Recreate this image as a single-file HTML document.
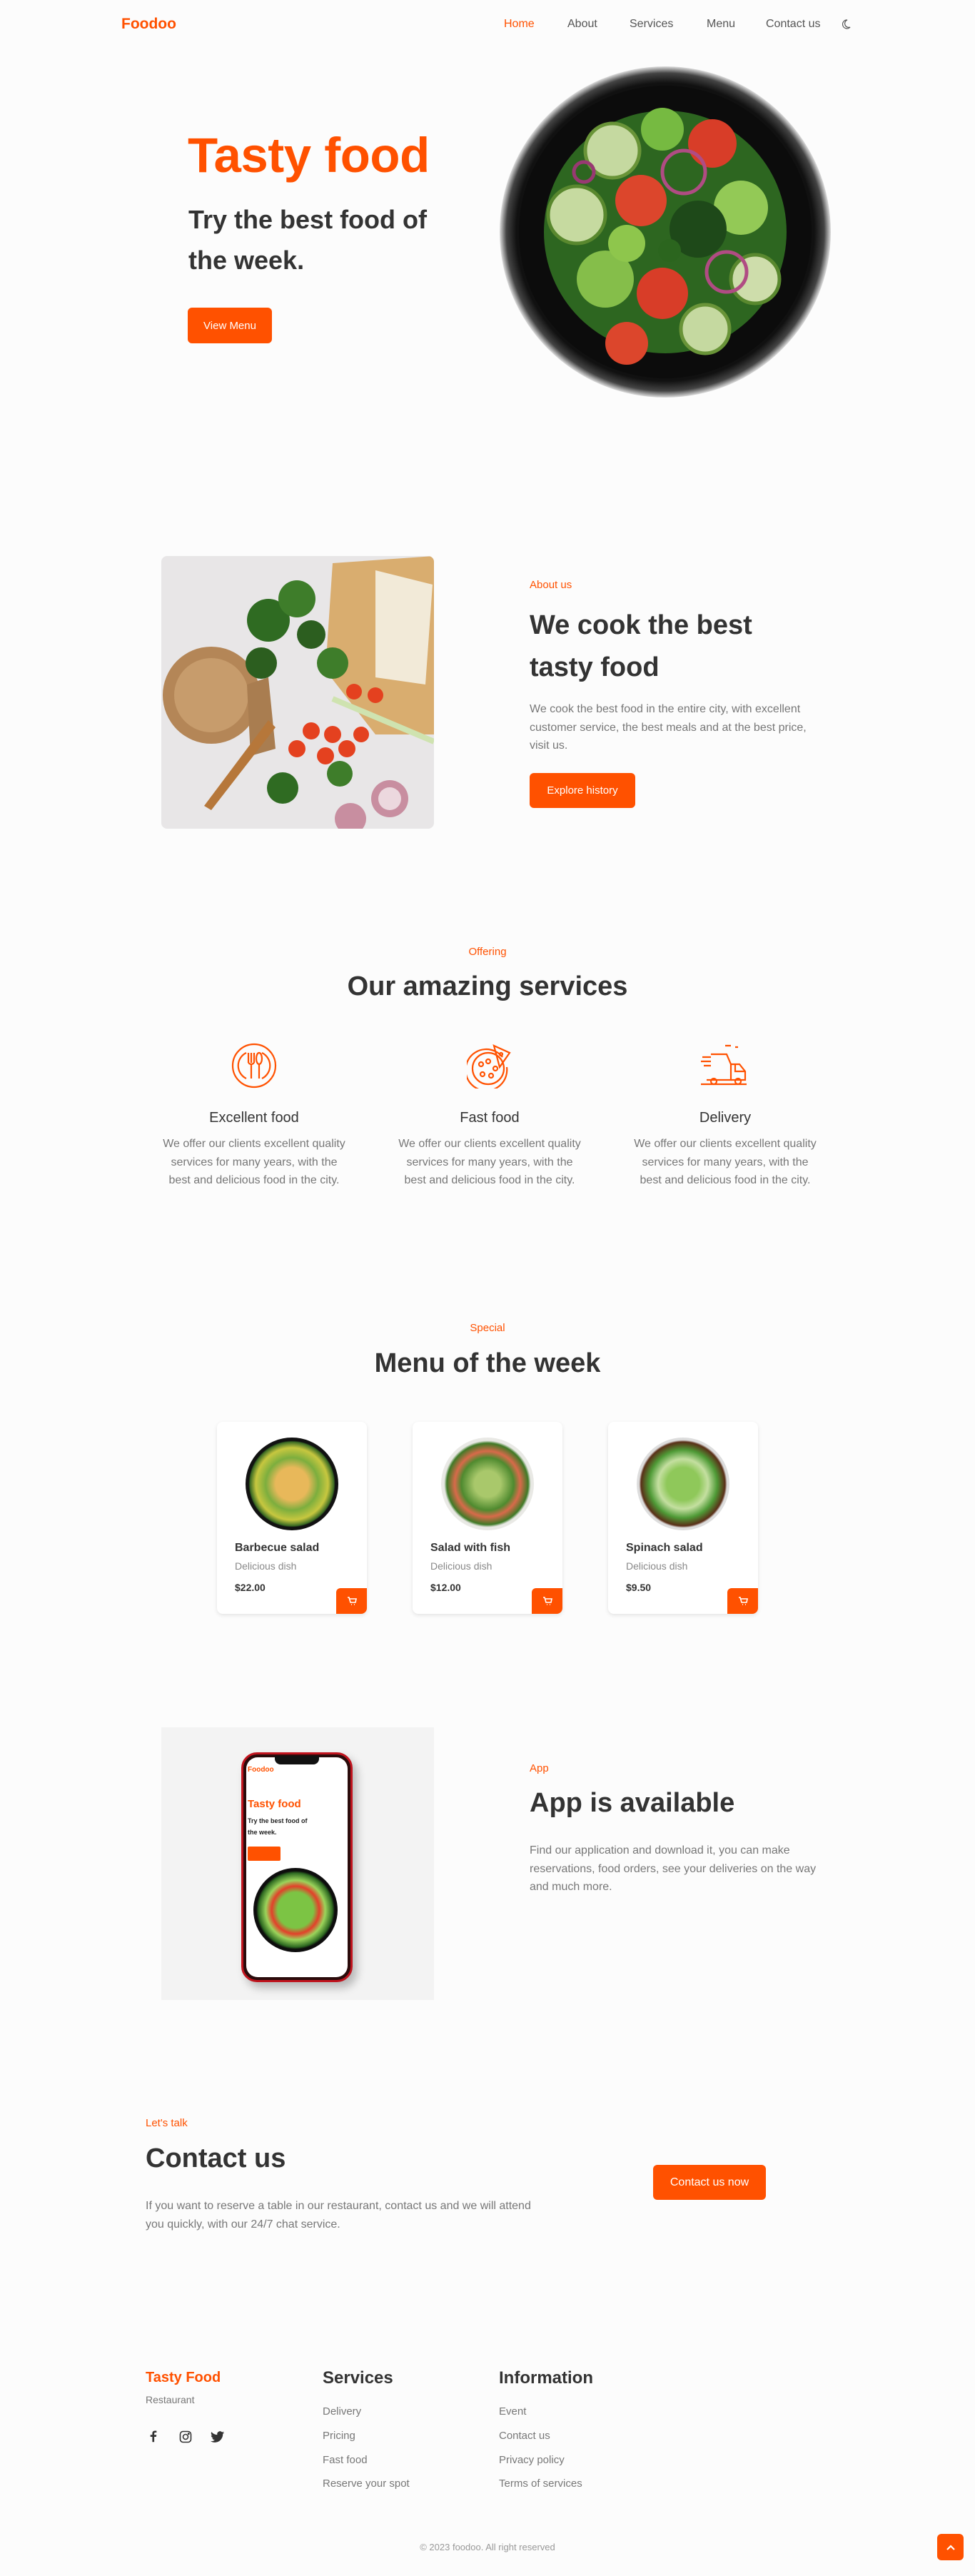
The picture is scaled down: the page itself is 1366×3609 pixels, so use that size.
<!DOCTYPE html>
<html><head><meta charset="utf-8">
<style>
*{margin:0;padding:0;box-sizing:border-box}
body{width:1366px;height:3609px;background:#fcfcfc;font-family:"Liberation Sans",Arial,sans-serif;color:#333;position:relative;overflow:hidden}
.a{position:absolute;white-space:nowrap}
.or{color:#ff5100}
.btn{position:absolute;background:#ff5100;color:#fff;border-radius:6px;display:flex;align-items:center;justify-content:center;font-size:15px}
.nav{font-size:16px;color:#555;top:25px}
.sub{font-size:15px;color:#ff5100}
.h2{font-size:38px;font-weight:bold;color:#333}
.p{font-size:16px;color:#777;line-height:25.6px;white-space:normal}
.c{text-align:center}
.card{position:absolute;top:1992px;width:210px;height:269px;background:#fff;border-radius:8px;box-shadow:0 2px 6px rgba(0,0,0,.1);overflow:hidden}
.card .t{position:absolute;left:25px;top:168px;font-size:16px;font-weight:bold;color:#333}
.card .d{position:absolute;left:25px;top:194px;font-size:14px;color:#888}
.card .pr{position:absolute;left:25px;top:224px;font-size:14px;font-weight:bold;color:#333}
.card .cb{position:absolute;right:0;bottom:0;width:43px;height:36px;background:#ff5100;border-radius:6px 0 0 0;display:flex;align-items:center;justify-content:center}
.card .im{position:absolute;left:40px;top:22px;width:130px;height:130px;border-radius:50%}
.fl{font-size:15px;color:#777;position:absolute}
.fh{font-size:24px;font-weight:bold;color:#333;position:absolute}
</style></head><body>

<div class="a or" style="left:170px;top:22px;font-size:21px;font-weight:bold">Foodoo</div>
<div class="a nav or" style="left:706px;color:#ff5100">Home</div>
<div class="a nav" style="left:795px">About</div>
<div class="a nav" style="left:882px">Services</div>
<div class="a nav" style="left:990px">Menu</div>
<div class="a nav" style="left:1073px">Contact us</div>
<svg class="a" style="left:1180px;top:27px" width="12" height="14" viewBox="0 0 12 14"><path d="M7 1A6 6 0 1 0 11 11 5 5 0 0 1 7 1z" fill="none" stroke="#555" stroke-width="1.2"/></svg>

<div class="a or" style="left:263px;top:178px;font-size:69px;font-weight:bold;letter-spacing:-0.5px">Tasty food</div>
<div class="a" style="left:264px;top:279px;font-size:36px;font-weight:bold;line-height:57px;color:#333">Try the best food of<br>the week.</div>
<div class="btn" style="left:263px;top:431px;width:118px;height:50px">View Menu</div>

<svg class="a" style="left:698px;top:91px" width="468" height="468" viewBox="0 0 468 468">
<defs><radialGradient id="rim" cx="50%" cy="50%" r="50%"><stop offset="90%" stop-color="#111"/><stop offset="96%" stop-color="#444"/><stop offset="100%" stop-color="#ddd"/></radialGradient></defs>
<circle cx="234" cy="234" r="232" fill="url(#rim)"/>
<circle cx="234" cy="234" r="205" fill="#0c0c0c"/>
<g opacity=".95">
<circle cx="234" cy="234" r="170" fill="#2f6b22"/>
<circle cx="160" cy="120" r="38" fill="#cfe4a8" stroke="#6f9c3b" stroke-width="5"/>
<circle cx="300" cy="110" r="34" fill="#e3402a"/>
<circle cx="230" cy="90" r="30" fill="#7cc444"/>
<circle cx="110" cy="210" r="40" fill="#d0e6a8" stroke="#5e8f30" stroke-width="5"/>
<circle cx="340" cy="200" r="38" fill="#9bd45b"/>
<circle cx="200" cy="190" r="36" fill="#e84a2e"/>
<circle cx="280" cy="230" r="40" fill="#1f4d1a"/>
<circle cx="360" cy="300" r="34" fill="#d9e9b4" stroke="#5e8f30" stroke-width="5"/>
<circle cx="150" cy="300" r="40" fill="#8cc84e"/>
<circle cx="230" cy="320" r="36" fill="#e3402a"/>
<circle cx="290" cy="370" r="34" fill="#cfe4a8" stroke="#6f9c3b" stroke-width="5"/>
<circle cx="180" cy="390" r="30" fill="#e84a2e"/>
<circle cx="120" cy="150" r="14" fill="none" stroke="#a03c78" stroke-width="5"/>
<circle cx="260" cy="150" r="30" fill="none" stroke="#b9508a" stroke-width="5"/>
<circle cx="320" cy="290" r="28" fill="none" stroke="#b9508a" stroke-width="5"/>
<circle cx="180" cy="250" r="26" fill="#95d050"/>
<circle cx="240" cy="260" r="16" fill="#2d6a1f"/>
</g>
</svg>

<!-- about -->
<svg class="a" style="left:226px;top:779px;border-radius:8px" width="382" height="382" viewBox="0 0 382 382">
<rect width="382" height="382" fill="#e8e6e7"/>
<path d="M240 10 L382 0 L382 250 L300 250 L230 160 Z" fill="#d9ad6f"/>
<path d="M300 20 L380 40 L370 180 L300 170 Z" fill="#f2ead8"/>
<circle cx="70" cy="195" r="68" fill="#b48657"/>
<circle cx="70" cy="195" r="52" fill="#c79c6c"/>
<path d="M120 180 L150 170 L160 270 L125 280 Z" fill="#a97d50"/>
<path d="M150 230 L60 350 L70 356 L160 240 Z" fill="#b6773a"/>
<circle cx="150" cy="90" r="30" fill="#2f6b22"/><circle cx="190" cy="60" r="26" fill="#3e7d2a"/><circle cx="140" cy="150" r="22" fill="#2c5e1f"/><circle cx="240" cy="150" r="22" fill="#3e7d2a"/><circle cx="210" cy="110" r="20" fill="#2c5e1f"/>
<circle cx="170" cy="325" r="22" fill="#2f6b22"/><circle cx="250" cy="305" r="18" fill="#3e7d2a"/>
<circle cx="210" cy="245" r="12" fill="#e4411f"/><circle cx="240" cy="250" r="12" fill="#e4411f"/><circle cx="190" cy="270" r="12" fill="#e4411f"/><circle cx="230" cy="280" r="12" fill="#e4411f"/><circle cx="260" cy="270" r="12" fill="#e4411f"/><circle cx="280" cy="250" r="11" fill="#e4411f"/><circle cx="270" cy="190" r="11" fill="#e4411f"/><circle cx="300" cy="195" r="11" fill="#e4411f"/>
<path d="M240 200 L382 260" stroke="#cfe3b0" stroke-width="8"/>
<circle cx="320" cy="340" r="26" fill="#c88ea0"/><circle cx="320" cy="340" r="16" fill="#ecd8de"/><circle cx="265" cy="368" r="22" fill="#c88ea0"/>
</svg>
<div class="a sub" style="left:742px;top:811px">About us</div>
<div class="a h2" style="left:742px;top:847px;line-height:59px">We cook the best<br>tasty food</div>
<div class="a p" style="left:742px;top:981px;width:395px">We cook the best food in the entire city, with excellent customer service, the best meals and at the best price, visit us.</div>
<div class="btn" style="left:742px;top:1083px;width:148px;height:49px">Explore history</div>

<!-- services -->
<div class="a sub c" style="left:0;width:1366px;top:1325px">Offering</div>
<div class="a h2 c" style="left:0;width:1366px;top:1361px">Our amazing services</div>

<svg class="a" style="left:324px;top:1461px" width="64" height="64" viewBox="0 0 64 64" fill="none" stroke="#ff5100" stroke-width="2.2">
<circle cx="32" cy="32" r="30"/><path d="M21 14a20 20 0 0 0 0 36M43 14a20 20 0 0 1 0 36"/>
<path d="M24 14v14M28 14v14M32 14v14M24 28q4 4 8 0M28 30v20"/>
<ellipse cx="39" cy="22" rx="4" ry="8"/><path d="M39 30v20"/></svg>
<svg class="a" style="left:654px;top:1461px" width="64" height="64" viewBox="0 0 64 64" fill="none" stroke="#ff5100" stroke-width="2.2">
<path d="M50 20A29 29 0 1 0 56 34"/><circle cx="30" cy="36" r="22"/>
<path d="M38 4 L60 14 L46 34 Z"/><circle cx="20" cy="30" r="3"/><circle cx="30" cy="26" r="3"/><circle cx="22" cy="44" r="3"/><circle cx="34" cy="46" r="3"/><circle cx="40" cy="36" r="3"/><circle cx="48" cy="16" r="2"/></svg>
<svg class="a" style="left:980px;top:1461px" width="70" height="64" viewBox="0 0 70 64" fill="none" stroke="#ff5100" stroke-width="2.2">
<path d="M16 16h22l6 14v22H10"/><path d="M44 30h12l8 10v12h-20"/><path d="M50 30v10h14"/>
<circle cx="20" cy="54" r="4"/><circle cx="54" cy="54" r="4"/><path d="M2 58h64M4 20h12M2 26h14M6 32h10M36 4h8M50 6h4"/></svg>

<div class="a c" style="left:226px;width:260px;top:1555px;font-size:20px;color:#333">Excellent food</div>
<div class="a c" style="left:556px;width:260px;top:1555px;font-size:20px;color:#333">Fast food</div>
<div class="a c" style="left:886px;width:260px;top:1555px;font-size:20px;color:#333">Delivery</div>
<div class="a p c" style="left:226px;width:260px;top:1590px">We offer our clients excellent quality services for many years, with the best and delicious food in the city.</div>
<div class="a p c" style="left:556px;width:260px;top:1590px">We offer our clients excellent quality services for many years, with the best and delicious food in the city.</div>
<div class="a p c" style="left:886px;width:260px;top:1590px">We offer our clients excellent quality services for many years, with the best and delicious food in the city.</div>

<!-- menu -->
<div class="a sub c" style="left:0;width:1366px;top:1852px">Special</div>
<div class="a h2 c" style="left:0;width:1366px;top:1889px">Menu of the week</div>

<div class="card" style="left:304px">
<div class="im" style="background:radial-gradient(circle at 50% 50%,#e8b85a 0 25%,#7cae3e 40%,#c7c73f 55%,#3a6b24 64%,#111 66%,#1a1a1a 100%)"></div>
<div class="t">Barbecue salad</div><div class="d">Delicious dish</div><div class="pr">$22.00</div>
<div class="cb"><svg width="14" height="14" viewBox="0 0 14 14" fill="none" stroke="#fff" stroke-width="1.6"><path d="M1 2h2l2 7h7l1-5H4M6 12h1M10 12h1"/></svg></div></div>
<div class="card" style="left:578px">
<div class="im" style="background:radial-gradient(circle at 50% 50%,#a9c86b 0 20%,#4f8a2f 40%,#d86a4a 50%,#3f7a27 62%,#e8e8e4 66%,#f4f4f2 100%)"></div>
<div class="t">Salad with fish</div><div class="d">Delicious dish</div><div class="pr">$12.00</div>
<div class="cb"><svg width="14" height="14" viewBox="0 0 14 14" fill="none" stroke="#fff" stroke-width="1.6"><path d="M1 2h2l2 7h7l1-5H4M6 12h1M10 12h1"/></svg></div></div>
<div class="card" style="left:852px">
<div class="im" style="background:radial-gradient(circle at 50% 50%,#8fc85a 0 25%,#c4dfa0 38%,#4e9a36 52%,#5a2f18 64%,#dcdcdc 67%,#eee 100%)"></div>
<div class="t">Spinach salad</div><div class="d">Delicious dish</div><div class="pr">$9.50</div>
<div class="cb"><svg width="14" height="14" viewBox="0 0 14 14" fill="none" stroke="#fff" stroke-width="1.6"><path d="M1 2h2l2 7h7l1-5H4M6 12h1M10 12h1"/></svg></div></div>

<!-- app -->
<div class="a" style="left:226px;top:2420px;width:382px;height:382px;background:#f3f3f3"></div>
<div class="a" style="left:338px;top:2455px;width:156px;height:322px;border-radius:22px;background:#2a0b0b;box-shadow:6px 8px 12px rgba(0,0,0,.25);border:3px solid #c0141e"></div>
<div class="a" style="left:345px;top:2462px;width:142px;height:308px;border-radius:16px;background:#fff"></div>
<div class="a" style="left:385px;top:2460px;width:62px;height:12px;border-radius:0 0 8px 8px;background:#111"></div>
<div class="a or" style="left:347px;top:2474px;font-size:10px;font-weight:bold">Foodoo</div>
<div class="a or" style="left:347px;top:2519px;font-size:15px;font-weight:bold">Tasty food</div>
<div class="a" style="left:347px;top:2543px;font-size:9px;line-height:16px;color:#222;font-weight:bold">Try the best food of<br>the week.</div>
<div class="a" style="left:347px;top:2587px;width:46px;height:20px;background:#ff5100;border-radius:2px"></div>
<div class="a" style="left:355px;top:2617px;width:118px;height:118px;border-radius:50%;background:radial-gradient(circle,#7cc444 0 30%,#e3402a 40%,#9bd45b 50%,#2f6b22 62%,#0c0c0c 66%,#222 95%,#bbb 100%)"></div>
<div class="a sub" style="left:742px;top:2469px">App</div>
<div class="a h2" style="left:742px;top:2505px">App is available</div>
<div class="a p" style="left:742px;top:2580px;width:425px">Find our application and download it, you can make reservations, food orders, see your deliveries on the way and much more.</div>

<!-- contact -->
<div class="a sub" style="left:204px;top:2966px">Let's talk</div>
<div class="a h2" style="left:204px;top:3003px">Contact us</div>
<div class="a p" style="left:204px;top:3078px;width:565px">If you want to reserve a table in our restaurant, contact us and we will attend you quickly, with our 24/7 chat service.</div>
<div class="btn" style="left:915px;top:3033px;width:158px;height:49px;font-size:16px">Contact us now</div>

<!-- footer -->
<div class="a or" style="left:204px;top:3320px;font-size:20px;font-weight:bold">Tasty Food</div>
<div class="a" style="left:204px;top:3354px;font-size:14px;color:#777">Restaurant</div>
<svg class="a" style="left:208px;top:3405px" width="14" height="18" viewBox="0 0 14 18"><path d="M9 18V10h3l.5-3H9V5c0-1 .4-1.6 1.6-1.6H12.6V.7C12.2.6 11 .5 10 .5 7.6.5 6 2 6 4.6V7H3v3h3v8z" fill="#333" transform="scale(.9)"/></svg>
<svg class="a" style="left:251px;top:3405px" width="18" height="18" viewBox="0 0 18 18" fill="none" stroke="#333" stroke-width="1.6"><rect x="1.5" y="1.5" width="15" height="15" rx="4"/><circle cx="9" cy="9" r="3.5"/><circle cx="13.3" cy="4.7" r=".6" fill="#333"/></svg>
<svg class="a" style="left:295px;top:3406px" width="20" height="17" viewBox="0 0 24 20"><path d="M23 2.3c-.8.4-1.8.6-2.7.7 1-.6 1.700-1.500 2-2.6-.9.6-1.9 1-3 1.2A4.7 4.7 0 0 0 11.3 6 13.3 13.3 0 0 1 1.6 1.1a4.7 4.7 0 0 0 1.5 6.3c-.8 0-1.5-.2-2.1-.6 0 2.3 1.6 4.2 3.8 4.6-.7.2-1.4.2-2.1.1.6 1.9 2.3 3.2 4.4 3.3A9.4 9.4 0 0 1 0 16.7 13.3 13.3 0 0 0 7.2 18.8c8.7 0 13.4-7.2 13.4-13.4v-.6c.9-.7 1.700-1.500 2.4-2.5z" fill="#333"/></svg>

<div class="fh" style="left:452px;top:3318px">Services</div>
<div class="fl" style="left:452px;top:3370px">Delivery</div>
<div class="fl" style="left:452px;top:3404px">Pricing</div>
<div class="fl" style="left:452px;top:3438px">Fast food</div>
<div class="fl" style="left:452px;top:3471px">Reserve your spot</div>
<div class="fh" style="left:699px;top:3318px">Information</div>
<div class="fl" style="left:699px;top:3370px">Event</div>
<div class="fl" style="left:699px;top:3404px">Contact us</div>
<div class="fl" style="left:699px;top:3438px">Privacy policy</div>
<div class="fl" style="left:699px;top:3471px">Terms of services</div>

<div class="a c" style="left:0;width:1366px;top:3561px;font-size:13px;color:#999">© 2023 foodoo. All right reserved</div>
<div class="btn" style="left:1313px;top:3550px;width:37px;height:37px"><svg width="14" height="10" viewBox="0 0 14 10"><path d="M2 8l5-5 5 5" fill="none" stroke="#fff" stroke-width="2.2"/></svg></div>
</body></html>
